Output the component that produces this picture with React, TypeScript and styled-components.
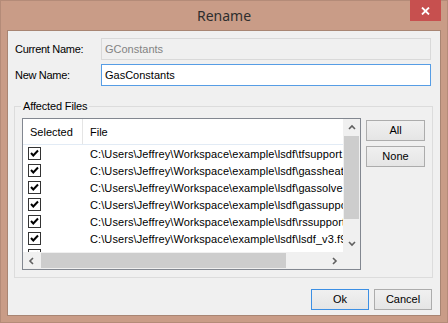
import React from 'react'
import styled, { createGlobalStyle } from 'styled-components'

const GlobalStyle = createGlobalStyle`
  html, body {
    margin: 0;
    padding: 0;
    background: #ffffff;
  }
  body {
    font-family: "Liberation Sans", Arial, sans-serif;
    font-size: 11px;
    color: #000000;
  }
  * {
    box-sizing: border-box;
  }
`

const Window = styled.div`
  width: 448px;
  height: 323px;
  display: flex;
  flex-direction: column;
  background: #c99c87;
  border: 1px solid #b48b78;
  padding: 0 6px 6px;
`

const TitleBar = styled.div`
  height: 29px;
  flex: 0 0 29px;
  display: grid;
  grid-template-columns: 1fr auto 1fr;
  align-items: start;
`

const Title = styled.div`
  grid-column: 2;
  margin-top: 5px;
  font-family: "Noto Sans", "Open Sans", sans-serif;
  font-size: 14px;
  line-height: 19px;
  color: #2e2e2e;
`

const CloseButton = styled.div`
  grid-column: 3;
  justify-self: end;
  margin-top: -1px;
  width: 31px;
  height: 21px;
  background: #c7504f;
  display: flex;
  align-items: center;
  justify-content: center;
`

const Client = styled.div`
  flex: 1;
  display: flex;
  flex-direction: column;
  background: #f0f0f0;
  border: 1px solid #a88573;
  padding: 7px 7px 0 6px;
`

const FormGrid = styled.div`
  display: grid;
  grid-template-columns: 86px 1fr;
  row-gap: 4px;
  align-items: center;
  padding-left: 1px;
  margin-right: 2px;
`

const Label = styled.span`
  line-height: 13px;
  letter-spacing: -0.3px;
`

const TextBox = styled.div<{ $state: 'disabled' | 'focused' }>`
  height: 22px;
  display: flex;
  align-items: center;
  padding: 0 3px 1px;
  border: 1px solid ${(p) => (p.$state === 'focused' ? '#569de5' : '#d9d9d9')};
  background: ${(p) => (p.$state === 'focused' ? '#ffffff' : '#f0f0f0')};
  color: ${(p) => (p.$state === 'focused' ? '#000000' : '#838383')};
`

const GroupBox = styled.div`
  position: relative;
  margin-top: 20px;
  border: 1px solid #dcdcdc;
  padding: 11px 7px 7px;
  display: flex;
  gap: 5px;
`

const Legend = styled.span`
  position: absolute;
  top: -7px;
  left: 6px;
  padding: 0 2px;
  line-height: 13px;
  letter-spacing: -0.15px;
  background: #f0f0f0;
`

const ListView = styled.div`
  flex: 0 0 339px;
  height: 152px;
  border: 1px solid #828790;
  background: #ffffff;
  display: grid;
  grid-template-columns: 1fr 17px;
  grid-template-rows: 1fr 17px;
  overflow: hidden;
`

const Viewport = styled.div`
  overflow: hidden;
  min-width: 0;
  min-height: 0;
`

const HeaderRow = styled.div`
  display: flex;
  height: 26px;
  border-bottom: 1px solid #e2ebf5;
`

const HeaderCell = styled.div<{ $width?: number; $sep?: boolean }>`
  display: flex;
  align-items: center;
  padding-left: 7px;
  flex: ${(p) => (p.$width ? `0 0 ${p.$width}px` : '1')};
  border-right: ${(p) => (p.$sep ? '1px solid #e5e5e5' : 'none')};
`

const Row = styled.div`
  display: flex;
  align-items: center;
  height: 17px;
`

const CheckCell = styled.div`
  flex: 0 0 60px;
  padding-left: 5px;
  display: flex;
  align-items: center;
`

const FileCell = styled.div`
  padding-left: 7px;
  white-space: nowrap;
  letter-spacing: 0.1px;
`

const CheckBox = styled.span`
  width: 13px;
  height: 13px;
  border: 1px solid #333333;
  background: #ffffff;
  display: flex;
  align-items: center;
  justify-content: center;
`

const VScroll = styled.div`
  background: #f0f0f0;
  display: flex;
  flex-direction: column;
`

const HScroll = styled.div`
  background: #f0f0f0;
  display: flex;
`

const Corner = styled.div`
  background: #f0f0f0;
`

const ArrowBox = styled.div`
  flex: 0 0 17px;
  display: flex;
  align-items: center;
  justify-content: center;
`

const Thumb = styled.div<{ $vertical?: boolean }>`
  background: #cdcdcd;
  ${(p) =>
    p.$vertical
      ? 'flex: 0 0 83px; margin: 0 1px;'
      : 'flex: 0 0 245px; margin: 1px 0 1px 1px;'}
`

const Spacer = styled.div`
  flex: 1;
`

const SideButtons = styled.div`
  flex: 0 0 59px;
  display: flex;
  flex-direction: column;
  gap: 5px;
  padding-top: 2px;
`

const Button = styled.div<{ $default?: boolean; $width?: number }>`
  height: 21px;
  width: ${(p) => (p.$width ? `${p.$width}px` : 'auto')};
  display: flex;
  align-items: center;
  justify-content: center;
  border: 1px solid ${(p) => (p.$default ? '#3c8fe4' : '#acacac')};
  background: linear-gradient(#f0f0f0, #e5e5e5);
  line-height: 13px;
`

const Footer = styled.div`
  display: flex;
  justify-content: flex-end;
  gap: 5px;
  margin-top: 11px;
  margin-right: 1px;
`

const Chevron = ({ dir }: { dir: 'up' | 'down' | 'left' | 'right' }) => {
  const paths = {
    up: 'M1 5 L4 2 L7 5',
    down: 'M1 2 L4 5 L7 2',
    left: 'M5 1 L2 4 L5 7',
    right: 'M2 1 L5 4 L2 7',
  }
  const size = dir === 'up' || dir === 'down' ? { w: 8, h: 7 } : { w: 7, h: 8 }
  return (
    <svg width={size.w} height={size.h} viewBox={`0 0 ${size.w} ${size.h}`}>
      <path d={paths[dir]} fill="none" stroke="#606060" strokeWidth="1.6" />
    </svg>
  )
}

const CheckMark = () => (
  <svg width="11" height="11" viewBox="0 0 11 11">
    <path d="M2 5 L4.3 7.5 L9 2.5" fill="none" stroke="#000000" strokeWidth="2" />
  </svg>
)

const base = 'C:\\Users\\Jeffrey\\Workspace\\example\\lsdf\\'
const files = [
  'tfsupport.f90',
  'gassheat.f90',
  'gassolve.f90',
  'gassupport.f90',
  'rssupport.f90',
  'lsdf_v3.f90',
  'meshgen.f90',
]

export default function App() {
  return (
    <>
      <GlobalStyle />
      <Window>
        <TitleBar>
          <Title>Rename</Title>
          <CloseButton>
            <svg width="9" height="8" viewBox="0 0 9 8">
              <path d="M1 0.5 L8 7.5 M8 0.5 L1 7.5" stroke="#ffffff" strokeWidth="1.8" />
            </svg>
          </CloseButton>
        </TitleBar>
        <Client>
          <FormGrid>
            <Label>Current Name:</Label>
            <TextBox $state="disabled">GConstants</TextBox>
            <Label>New Name:</Label>
            <TextBox $state="focused">GasConstants</TextBox>
          </FormGrid>

          <GroupBox>
            <Legend>Affected Files</Legend>
            <ListView>
              <Viewport>
                <HeaderRow>
                  <HeaderCell $width={60} $sep>Selected</HeaderCell>
                  <HeaderCell>File</HeaderCell>
                </HeaderRow>
                {files.map((f) => (
                  <Row key={f}>
                    <CheckCell>
                      <CheckBox>
                        <CheckMark />
                      </CheckBox>
                    </CheckCell>
                    <FileCell>{base + f}</FileCell>
                  </Row>
                ))}
              </Viewport>
              <VScroll>
                <ArrowBox>
                  <Chevron dir="up" />
                </ArrowBox>
                <Thumb $vertical />
                <Spacer />
                <ArrowBox>
                  <Chevron dir="down" />
                </ArrowBox>
              </VScroll>
              <HScroll>
                <ArrowBox>
                  <Chevron dir="left" />
                </ArrowBox>
                <Thumb />
                <Spacer />
                <ArrowBox>
                  <Chevron dir="right" />
                </ArrowBox>
              </HScroll>
              <Corner />
            </ListView>
            <SideButtons>
              <Button>All</Button>
              <Button>None</Button>
            </SideButtons>
          </GroupBox>

          <Footer>
            <Button $default $width={58}>Ok</Button>
            <Button $width={58}>Cancel</Button>
          </Footer>
        </Client>
      </Window>
    </>
  )
}
